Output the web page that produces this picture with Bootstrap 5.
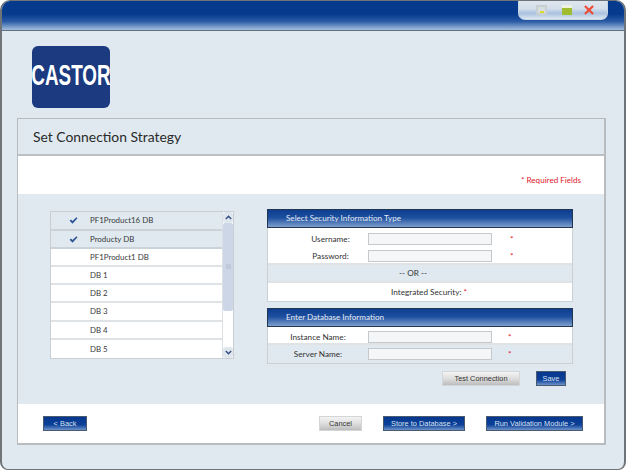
<!DOCTYPE html>
<html lang="en">
<head>
  <meta charset="UTF-8">
  <meta name="viewport" content="width=device-width, initial-scale=1">
  <title>Set Connection Strategy</title>
  <link href="https://cdn.jsdelivr.net/npm/bootstrap@5.3.2/dist/css/bootstrap.min.css" rel="stylesheet">
  <style>
    html, body { height: 100%; margin: 0; background: #fff; }
    body { font-family: Lato, "Open Sans", sans-serif; color: #333; font-size: 8.2px; }

    /* outer window */
    .app-window { position: relative; width: 626px; height: 470px; background: #dfe9ef; border: 1px solid #6f7478; border-width: 1px 2px 1px 2px; border-radius: 10px 10px 8px 8px; overflow: hidden; }
    .app-top { height: 30px; background: linear-gradient(#053a8d 0, #053a8d 45%, #2a5aa5 70%, #a4bfdc 100%); border-bottom: 1px solid #60707f; }
    .win-tab { position: absolute; top: -1px; left: 516px; width: 90px; height: 20px; padding-left: 17px; gap: 15px; background: linear-gradient(#dfe7ef 0, #d5dfea 45%, #a9c2df 70%, #dce7f0 100%); border-radius: 0 0 7px 7px; border: 1px solid #c6d5e4; border-top: 0; }
    .win-min { width: 11px; height: 10px; border: 2px solid #c9ced2; background: #d6dde3; position: relative; }
    .win-min::after { content: ""; position: absolute; left: 2px; right: 1px; bottom: 0; height: 2px; background: #d7dc2a; }
    .win-max { width: 10px; height: 10px; background: linear-gradient(#eef3dd 0, #eef3dd 30%, #9fbd2e 35%, #9fbd2e 100%); }
    .win-close { width: 10px; height: 10px; margin-left: -3px; }

    .logo-row { padding: 15px 0 10px 30px; }
    .logo-box { width: 78px; height: 62px; padding-bottom: 3px; background: #1b3a80; border-radius: 6px; color: #fff; font-family: "Liberation Sans", sans-serif; font-weight: 700; font-size: 29px; line-height: 1; white-space: nowrap; overflow: visible; }
    .logo-word { display: inline-block; transform: scaleX(0.65); }

    /* main panel */
    .main-panel { margin: 0 0 0 15px; width: 589px; height: 327px; border: 1px solid #b8bcbf; border-width: 1px 2px 2px 1px; }
    .panel-title { height: 37px; padding-left: 15px; background: #dfe9ef; border-bottom: 2px solid #bcc0c3; font-size: 13.9px; line-height: 1; color: #2a2a2a; }
    .req-row { height: 38px; padding: 18px 23px 0 0; background: #fff; color: #e0202c; font-size: 8.1px; line-height: 13px; }
    .body-row { height: 210px; background: #dfe9ef; padding: 15px 31px 0 32px; }
    .foot-row { height: 39px; background: #fff; padding: 12px 21px 0 25px; }

    /* database list */
    .db-wrap { width: 184px; height: 148px; margin-top: 2px; border: 1px solid #c8ced2; background: #fff; }
    .db-list { width: 172px; }
    .db-list .list-group-item { display: flex; align-items: center; height: 18.25px; padding: 2px 0 0 39px; border: 0; border-bottom: 2px solid #dfe3e6; border-radius: 0; background: #fff; color: #3a3a3a; font-size: 7.9px; line-height: 1; }
    .db-list .list-group-item.db-on { background: #dfe9ef; border-bottom-color: #ccd3d8; }
    .db-list .list-group-item:first-child { height: 19.25px; padding-top: 0; }
    .db-list .list-group-item:nth-child(2) { height: 17.25px; padding-top: 3px; }
    .db-list .list-group-item:last-child { border-bottom: 0; }
    .db-check { position: absolute; left: 18px; top: 5px; width: 9px; height: 7px; }
    .db-scroll { width: 11px; background: #fff; border-left: 1px solid #dce1e5; }
    .db-arrow { height: 11px; background: #dfe6ee; border-radius: 3px; }
    .db-thumb { height: 89px; background: #cdd6e6; border-radius: 2px; }
    .db-grip { width: 5px; height: 5px; background: #bfc9da; }
    .db-rest { height: 37px; }

    /* right side forms */
    .form-side { width: 306px; }
    .sec-head { height: 19px; padding-left: 18px; border: 1px solid #23364f; background: linear-gradient(#0d3e90 0, #1d4f9f 45%, #7f9fcc 100%); color: #e3ebf5; font-size: 8.1px; line-height: 16px; white-space: nowrap; }
    .sec-box { border: 1px solid #ccd1d5; border-top: 0; background: #fff; margin-bottom: 6px; }
    .sec-row { display: flex; align-items: center; height: 18px; border-bottom: 2px solid #dfe3e6; }
    .sec-row:last-child { border-bottom: 0; }
    .sec-login { height: 37px; padding-top: 5px; gap: 5px; flex-direction: column; align-items: stretch; }
    .login-line { display: flex; align-items: center; height: 12px; }
    .sec-or { padding-right: 14px; }
    .sec-integrated { padding-left: 18px; }
    .sec-instance { padding-top: 4px; }
    .lbl-a { width: 100px; padding-left: 25px; text-align: center; }
    .lbl-b { width: 100px; text-align: center; }
    .in-box { width: 124px; }
    .in-box.form-control { height: 12px; min-height: 0; padding: 0; border: 1px solid #c5c9cc; border-radius: 0; background: #f5f6f7; }
    .star { color: #e0202c; }
    .star-a { margin-left: 18px; }
    .star-b { margin-left: 16px; }
    .row-tint { background: #dfe9ef; }
    .form-actions { gap: 16px; padding: 1px 7px 0 0; }

    /* buttons */
    .btn.btn-blue, .btn.btn-grey { height: 15px; padding: 0; border-radius: 0; font-family: "Liberation Sans", Arial, sans-serif; font-size: 7.4px; line-height: 13px; }
    .btn.btn-blue { color: #d7e2f0; border: 1px solid #4a5a70; background: linear-gradient(#05378c 0, #0c4099 60%, #6e93c9 100%); }
    .btn.btn-grey { color: #333; border: 1px solid #d3d6d8; background: linear-gradient(#f4f4f4 0, #dedede 50%, #bdbdbd 100%); }
    .w-save { width: 30px; }
    .w-test { width: 78px; }
    .w-back { width: 44px; }
    .w-cancel { width: 43px; }
    .w-store { width: 82px; margin-left: 21px; }
    .w-run { width: 97px; margin-left: 21px; }
  </style>
</head>
<body>
  <div class="app-window">
    <div class="app-top"></div>
    <div class="win-tab d-flex align-items-center">
      <div class="win-min"></div>
      <div class="win-max"></div>
      <svg class="win-close" viewBox="0 0 11 11"><path d="M1 1 L10 10 M10 1 L1 10" stroke="#ee4b35" stroke-width="2.4" fill="none"/></svg>
    </div>

    <div class="logo-row">
      <div class="logo-box d-flex align-items-center justify-content-center"><span class="logo-word">CASTOR</span></div>
    </div>

    <div class="main-panel">
      <div class="panel-title d-flex align-items-center">Set Connection Strategy</div>
      <div class="req-row text-end">* Required Fields</div>

      <div class="body-row d-flex justify-content-between">
        <div class="db-wrap d-flex">
          <div class="db-list list-group flex-grow-1">
            <div class="list-group-item db-on position-relative">
              <svg class="db-check" viewBox="0 0 10 8"><path d="M0.5 4.2 L2.2 2.8 L3.8 4.6 L8.4 0.4 L9.6 1.4 L3.9 7.6 Z" fill="#2f5596"/></svg>
              PF1Product16 DB
            </div>
            <div class="list-group-item db-on position-relative">
              <svg class="db-check" viewBox="0 0 10 8"><path d="M0.5 4.2 L2.2 2.8 L3.8 4.6 L8.4 0.4 L9.6 1.4 L3.9 7.6 Z" fill="#2f5596"/></svg>
              Producty DB
            </div>
            <div class="list-group-item">PF1Product1 DB</div>
            <div class="list-group-item">DB 1</div>
            <div class="list-group-item">DB 2</div>
            <div class="list-group-item">DB 3</div>
            <div class="list-group-item">DB 4</div>
            <div class="list-group-item">DB 5</div>
          </div>
          <div class="db-scroll d-flex flex-column">
            <div class="db-arrow d-flex align-items-center justify-content-center">
              <svg width="7" height="5" viewBox="0 0 7 5"><path d="M0.8 4 L3.5 1.2 L6.2 4" stroke="#2f4f80" stroke-width="1.4" fill="none"/></svg>
            </div>
            <div class="db-thumb d-flex align-items-center justify-content-center mt-auto"><div class="db-grip"></div></div>
            <div class="db-rest"></div>
            <div class="db-arrow d-flex align-items-center justify-content-center">
              <svg width="7" height="5" viewBox="0 0 7 5"><path d="M0.8 1 L3.5 3.8 L6.2 1" stroke="#2f4f80" stroke-width="1.4" fill="none"/></svg>
            </div>
          </div>
        </div>

        <div class="form-side">
          <div class="sec-head">Select Security Information Type</div>
          <div class="sec-box">
            <div class="sec-row sec-login">
              <div class="login-line"><span class="lbl-a">Username:</span><input class="form-control in-box" type="text"><span class="star star-a">*</span></div>
              <div class="login-line"><span class="lbl-a">Password:</span><input class="form-control in-box" type="text"><span class="star star-a">*</span></div>
            </div>
            <div class="sec-row sec-or row-tint justify-content-center">-- OR --</div>
            <div class="sec-row sec-integrated justify-content-center">Integrated Security:&nbsp;<span class="star">*</span></div>
          </div>

          <div class="sec-head">Enter Database Information</div>
          <div class="sec-box">
            <div class="sec-row sec-instance"><span class="lbl-b">Instance Name:</span><input class="form-control in-box" type="text"><span class="star star-b">*</span></div>
            <div class="sec-row row-tint"><span class="lbl-b">Server Name:</span><input class="form-control in-box" type="text"><span class="star star-b">*</span></div>
          </div>

          <div class="form-actions d-flex justify-content-end">
            <button class="btn btn-grey w-test" type="button">Test Connection</button>
            <button class="btn btn-blue w-save" type="button">Save</button>
          </div>
        </div>
      </div>

      <div class="foot-row d-flex">
        <button class="btn btn-blue w-back" type="button">&lt; Back</button>
        <button class="btn btn-grey w-cancel ms-auto" type="button">Cancel</button>
        <button class="btn btn-blue w-store" type="button">Store to Database &gt;</button>
        <button class="btn btn-blue w-run" type="button">Run Validation Module &gt;</button>
      </div>
    </div>
  </div>
  <script src="https://cdn.jsdelivr.net/npm/bootstrap@5.3.2/dist/js/bootstrap.bundle.min.js"></script>
</body>
</html>
